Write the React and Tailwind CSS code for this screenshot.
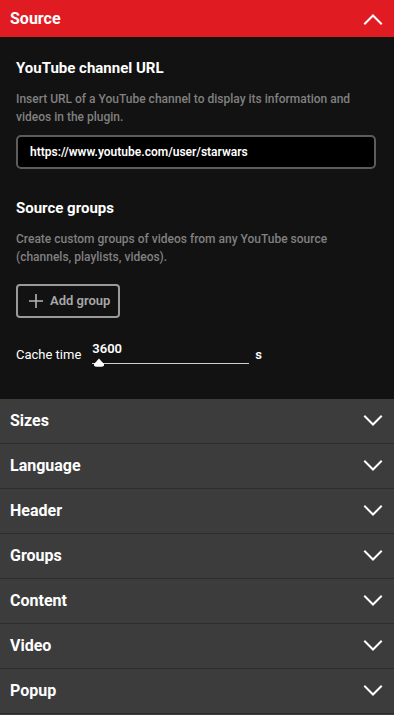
import React from "react";

const Chevron = ({ up }) => (
  <svg width="20" height="12" viewBox="0 0 20 12" fill="none" className="shrink-0">
    <path
      d={up ? "M2 10.5 L10 2.5 L18 10.5" : "M2 1.5 L10 9.5 L18 1.5"}
      stroke="#ffffff"
      strokeWidth="2"
      strokeLinecap="square"
    />
  </svg>
);

const sections = ["Sizes", "Language", "Header", "Groups", "Content", "Video", "Popup"];

export default function App() {
  return (
    <div className="w-[394px] h-[715px] bg-[#3c3c3c] overflow-hidden" style={{ fontFamily: "Roboto, 'Liberation Sans', sans-serif" }}>
      <div className="h-[37px] bg-[#e01c22] flex items-center justify-between pl-[10px] pr-[11px]">
        <span className="text-white font-bold text-[16px]">Source</span>
        <Chevron up />
      </div>
      <div className="bg-[#121212] h-[362px] px-4 pt-[22px]">
        <div className="text-white font-bold text-[15px] leading-[18px]">YouTube channel URL</div>
        <p className="mt-[13px] text-[12px] leading-[18px] text-[#808080] font-medium">
          Insert URL of a YouTube channel to display its information and videos in the plugin.
        </p>
        <div className="mt-[9px] h-[34px] w-[360px] rounded-[5px] border-2 border-[#5c5c5c] bg-black flex items-center pl-[12px]">
          <span className="text-white text-[12px] font-semibold">https://www.youtube.com/user/starwars</span>
        </div>
        <div className="mt-[30px] text-white font-bold text-[15px] leading-[18px]">Source groups</div>
        <p className="mt-[13px] text-[12px] leading-[18px] text-[#808080] font-medium">
          Create custom groups of videos from any YouTube source (channels, playlists, videos).
        </p>
        <div className="mt-[18px] w-[104px] h-[34px] rounded-[4px] border-2 border-[#9a9a9a] flex items-center pl-[10px] gap-[6px]">
          <svg width="16" height="16" viewBox="0 0 16 16" fill="none">
            <path d="M8 1 V15 M1 8 H15" stroke="#b5b5b5" strokeWidth="1.6" />
          </svg>
          <span className="text-[#a8a8a8] text-[13px] font-semibold">Add group</span>
        </div>
        <div className="mt-[23px] h-[26px] flex items-start">
          <span className="mt-[6px] text-white text-[13px] font-normal leading-[16px]">Cache time</span>
          <div className="ml-[11px] w-[157px] flex flex-col">
            <span className="text-white text-[13px] font-semibold leading-[15px]">3600</span>
            <div className="relative mt-[5px] h-[4px] flex items-center">
              <div className="w-full h-px bg-[#cfcfcf]" />
              <svg width="12" height="9" viewBox="0 0 12 9" className="absolute left-[1px] top-[-3px]">
                <path d="M6 0.5 L11 6 Q11.5 8.8 8.5 8.8 L3.5 8.8 Q0.5 8.8 1 6 Z" fill="#ffffff" />
              </svg>
            </div>
          </div>
          <span className="mt-[6px] ml-[6px] text-white text-[13px] font-semibold leading-[16px]">s</span>
        </div>
      </div>
      {sections.map((s) => (
        <div key={s} className="h-[45px] bg-[#3c3c3c] border-b border-[#2c2c2c] flex items-center justify-between pl-[10px] pr-[11px]">
          <span className="text-white font-bold text-[16px]">{s}</span>
          <Chevron />
        </div>
      ))}
    </div>
  );
}
